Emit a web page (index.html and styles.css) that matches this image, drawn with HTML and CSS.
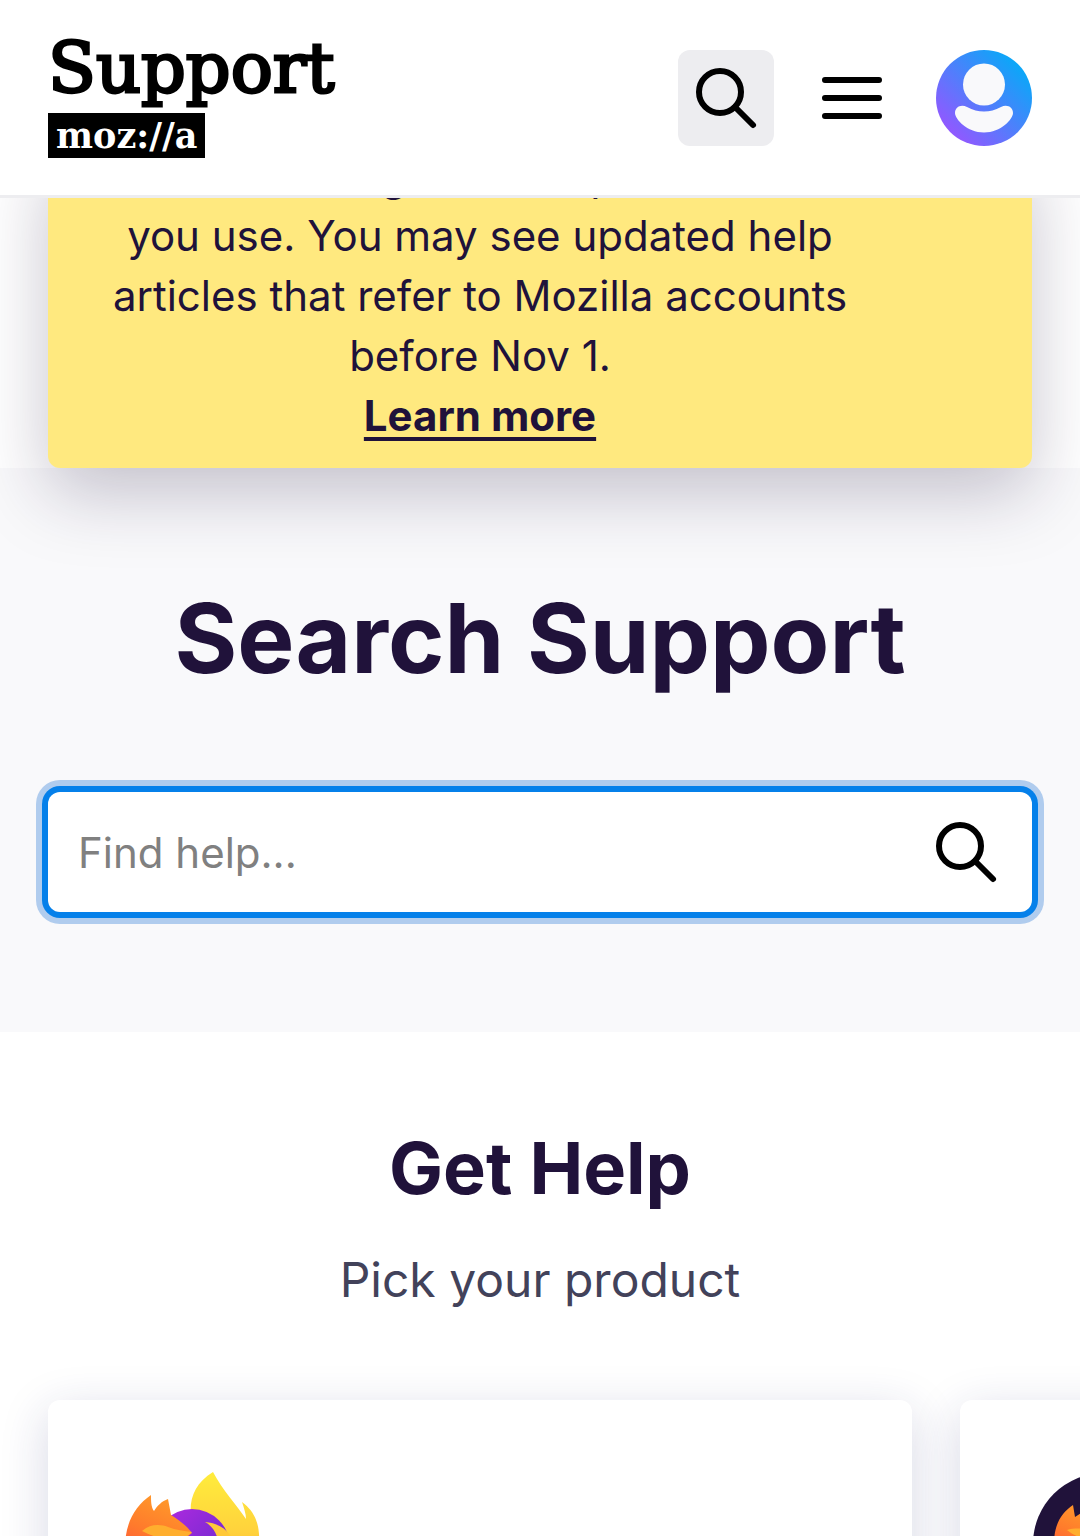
FILE: index.html
```html
<!DOCTYPE html>
<html lang="en">
<head>
<meta charset="utf-8">
<meta name="viewport" content="width=device-width, initial-scale=1">
<title>Mozilla Support</title>
<link rel="stylesheet" href="styles.css">
</head>
<body>
<div class="page">
  <header class="header">
    <a class="logo" href="#" aria-label="Mozilla Support">
      <span class="logo-name">Support</span>
      <span class="logo-brand">moz://a</span>
    </a>
    <nav class="actions" aria-label="Site">
      <button class="icon-button icon-button-active" type="button" aria-label="Search">
        <svg class="icon" viewBox="0 0 24 24"><circle cx="10" cy="10" r="7"/><path d="M15 15l6 6"/></svg>
      </button>
      <button class="icon-button" type="button" aria-label="Menu">
        <svg class="icon" viewBox="0 0 24 24"><path d="M3 6h18M3 12h18M3 18h18"/></svg>
      </button>
      <button class="icon-button icon-button-account" type="button" aria-label="Account">
        <svg class="avatar" viewBox="0 0 96 96">
          <defs><linearGradient id="avatar-fill" x1="0.15" y1="0.85" x2="0.85" y2="0.15"><stop offset="0" stop-color="#9059ff"/><stop offset="1" stop-color="#0ba7f8"/></linearGradient></defs>
          <circle cx="48" cy="48" r="48" fill="url(#avatar-fill)"/>
          <circle cx="48" cy="34.500" r="21" fill="#f9f9fb"/>
          <path fill="#f9f9fb" d="M31 57C37 60 42 61.500 48 61.500S59 60 65 57C71 54 77 57 77 63C77 69 65 82.500 48 82.500S19 69 19 63C19 57 25 54 31 57z"/>
        </svg>
      </button>
    </nav>
  </header>
  <main class="main">
    <section class="notice" aria-label="Announcement">
      <p class="notice-text">no other changes to the products that you use. You may see updated help articles that refer to Mozilla accounts before Nov 1.<br><a class="notice-link" href="#">Learn more</a></p>
    </section>
    <section class="hero">
      <h1 class="hero-title">Search Support</h1>
      <form class="search" role="search">
        <input class="search-input" type="search" placeholder="Find help..." aria-label="Find help">
        <button class="search-button" type="submit" aria-label="Search">
          <svg class="icon" viewBox="0 0 24 24"><circle cx="10" cy="10" r="7"/><path d="M15 15l6 6"/></svg>
        </button>
      </form>
    </section>
    <section class="products">
      <h2 class="products-title">Get Help</h2>
      <p class="products-text">Pick your product</p>
      <div class="cards">
        <a class="card" href="#" aria-label="Firefox">
          <svg class="card-logo" viewBox="0 0 144 144">
            <defs>
              <linearGradient id="fox-body" x1="0" y1="0.6" x2="0.3" y2="0"><stop offset="0" stop-color="#ff4a40"/><stop offset="0.500" stop-color="#ff7a2c"/><stop offset="1" stop-color="#ff9a2a"/></linearGradient>
              <linearGradient id="fox-tail" x1="0" y1="0" x2="0" y2="1"><stop offset="0" stop-color="#ffec3c"/><stop offset="0.600" stop-color="#ffd23c"/><stop offset="1" stop-color="#ffa82c"/></linearGradient>
              <linearGradient id="fox-globe" x1="0" y1="0" x2="1" y2="1"><stop offset="0" stop-color="#b52ae0"/><stop offset="1" stop-color="#592acb"/></linearGradient>
            </defs>
            <path fill="url(#fox-tail)" d="M93 0C75 11 69 27 71 44L110 100L139 72C140 56 137 41 122 30C124 36 126 42 126 47C116 32 103 19 93 0z"/>
            <circle cx="72" cy="75" r="38" fill="url(#fox-globe)"/>
            <path fill="#ffc838" d="M85 50C97 51 106 56 112 66L98 68C96 60 92 54 85 50z"/>
            <path fill="url(#fox-body)" d="M31 23C15 34 5 51 5 76C6 116 36 140 72 140C107 140 139 110 139 80L104 110C82 119 60 100 58 72C64 68 68 64 72 61C66 53 60 49 51 43L48 27C42 29 37 34 34 39C31 35 31 29 31 23z"/>
            <path fill="#ffae2e" d="M22 59C30 52 40 52 48 55C56 58 64 59 72 60C60 73 40 68 22 59z"/>
          </svg>
        </a>
        <a class="card" href="#" aria-label="Firefox for Enterprise">
          <svg class="card-logo" viewBox="0 0 144 144">
            <circle cx="72" cy="72" r="71" fill="#20123a"/>
            <path fill="url(#fox-body)" d="M41 33C29 41 22 53 22 72C22 100 43 123 72 123C101 123 123 100 123 72C121 52 111 42 98 36L72 59L55 37L43 45z"/>
            <path fill="#ffae2e" d="M35 58C44 55 60 57 72 60C60 69 47 68 35 58z"/>
          </svg>
        </a>
      </div>
    </section>
  </main>
</div>
</body>
</html>
```
FILE: styles.css
```css
* { box-sizing: border-box; }

body {
  margin: 0;
  background: #fff;
  color: #20123a;
  font-family: Inter, "Liberation Sans", sans-serif;
}

.page {
  display: flex;
  flex-direction: column;
  height: 100vh;
}

.header {
  display: flex;
  flex: none;
  align-items: center;
  justify-content: space-between;
  height: 198px;
  padding: 0 48px;
  background: #fff;
  border-bottom: 3px solid #ededf0;
}

.main {
  flex: 1;
  min-height: 0;
  overflow: hidden;
}

.logo {
  display: flex;
  flex-direction: column;
  align-items: flex-start;
  gap: 14px;
  color: #000;
  font-family: "DejaVu Serif", "Liberation Serif", serif;
  text-decoration: none;
}

.logo-name {
  font-size: 70px;
  line-height: 62px;
  -webkit-text-stroke: 3px #000;
}

.logo-brand {
  padding: 0 8px;
  background: #000;
  color: #fff;
  font-size: 35px;
  font-weight: 700;
  line-height: 45px;
}

.actions {
  display: flex;
  gap: 30px;
}

.icon-button {
  display: grid;
  place-items: center;
  width: 96px;
  height: 96px;
  padding: 0;
  border: 0;
  border-radius: 12px;
  background: transparent;
}

.icon-button-active { background: #ededf0; }

.icon-button-account { margin-left: 6px; }

.icon {
  display: block;
  width: 72px;
  height: 72px;
  fill: none;
  stroke: #000;
  stroke-width: 2;
  stroke-linecap: round;
}

.avatar {
  width: 96px;
  height: 96px;
}

.notice {
  position: relative;
  margin: -52px 48px 0;
  padding: 0 168px 22px 48px;
  border-radius: 12px;
  background: #ffe97f;
  box-shadow: 0 24px 72px rgba(32, 18, 58, 0.25);
}

.notice-text {
  margin: 0;
  font-size: 42px;
  line-height: 60px;
  text-align: center;
}

.notice-link {
  color: inherit;
  font-weight: 700;
  text-decoration-thickness: 4px;
  text-underline-offset: 6px;
}

.hero {
  padding: 112px 48px 120px;
  background: #f9f9fb;
}

.hero-title {
  margin: 0 0 96px;
  font-size: 96px;
  line-height: 116px;
  text-align: center;
}

.search {
  display: flex;
  align-items: center;
  height: 120px;
  padding-right: 30px;
  border-radius: 12px;
  background: #fff;
  box-shadow: 0 0 0 6px #0580ea, 0 0 0 12px #b0ccee;
}

.search-input {
  flex: 1;
  min-width: 0;
  height: 100%;
  padding: 0 30px;
  border: 0;
  outline: 0;
  background: transparent;
  color: inherit;
  font: inherit;
  font-size: 42px;
}

.search-input::placeholder { color: #808080; }

.search-button {
  padding: 0;
  border: 0;
  background: transparent;
}

.products { padding-top: 92px; text-align: center; }

.products-title {
  margin: 0;
  font-size: 72px;
  line-height: 88px;
}

.products-text {
  margin: 32px 0 84px;
  color: #42425a;
  font-size: 48px;
  line-height: 72px;
}

.cards {
  display: flex;
  gap: 48px;
  padding: 0 48px;
}

.card {
  flex: 0 0 80vw;
  padding: 72px;
  border-radius: 12px;
  background: #fff;
  box-shadow: 0 12px 48px rgba(32, 40, 110, 0.18);
  text-align: left;
}

.card-logo {
  display: block;
  width: 144px;
  height: 144px;
}
```
